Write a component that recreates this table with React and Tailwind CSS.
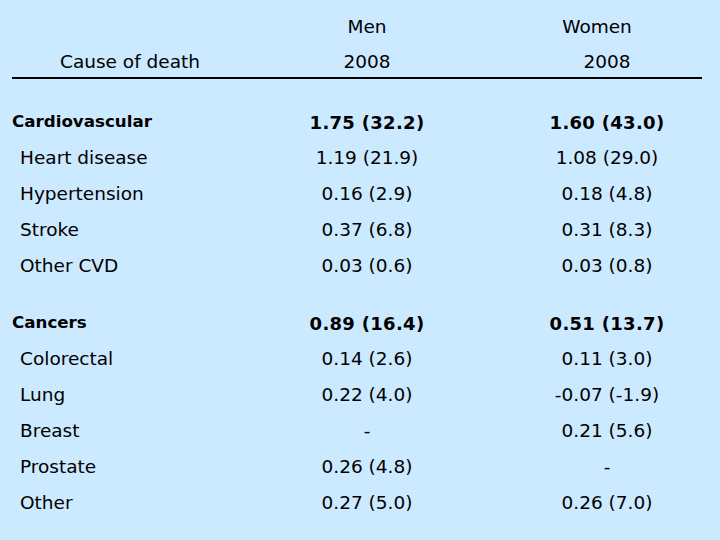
import React from 'react'

const groups = [
    {
        name: 'Cardiovascular',
        men: '1.75 (32.2)',
        women: '1.60 (43.0)',
        rows: [
            ['Heart disease', '1.19 (21.9)', '1.08 (29.0)'],
            ['Hypertension', '0.16 (2.9)', '0.18 (4.8)'],
            ['Stroke', '0.37 (6.8)', '0.31 (8.3)'],
            ['Other CVD', '0.03 (0.6)', '0.03 (0.8)'],
        ],
    },
    {
        name: 'Cancers',
        men: '0.89 (16.4)',
        women: '0.51 (13.7)',
        rows: [
            ['Colorectal', '0.14 (2.6)', '0.11 (3.0)'],
            ['Lung', '0.22 (4.0)', '-0.07 (-1.9)'],
            ['Breast', '-', '0.21 (5.6)'],
            ['Prostate', '0.26 (4.8)', '-'],
            ['Other', '0.27 (5.0)', '0.26 (7.0)'],
        ],
    },
]

const cols = "grid grid-cols-[228px_226px_226px] gap-x-[14px]"

const App = () => {
    return (
        <div className="w-[720px] h-[540px] overflow-hidden bg-[#cceaff] text-black pl-[12px] pt-[10px] font-['DejaVu_Sans',sans-serif] text-[18.5px]">
            <div className={`${cols} h-[34px] items-center`}>
                <div></div>
                <div className="text-center">Men</div>
                <div className="text-center pr-[20px]">Women</div>
            </div>
            <div className={`${cols} h-[33px] leading-[36px]`}>
                <div className="text-center pl-[8px]">Cause of death</div>
                <div className="text-center">2008</div>
                <div className="text-center">2008</div>
            </div>
            <div className="w-[690px] border-t-2 border-black"></div>

            {groups.map((g, i) => (
                <div key={g.name} className={i === 0 ? "mt-[25px]" : "mt-[21px]"}>
                    <div className={`${cols} h-[36px] items-center font-bold`}>
                        <div className="text-[16.7px]">{g.name}</div>
                        <div className="text-center text-[18px] tracking-[0.3px]">{g.men}</div>
                        <div className="text-center text-[18px] tracking-[0.3px]">{g.women}</div>
                    </div>
                    {g.rows.map(r => (
                        <div key={r[0]} className={`${cols} h-[36px] items-center`}>
                            <div className="pl-[8px]">{r[0]}</div>
                            <div className="text-center">{r[1]}</div>
                            <div className="text-center">{r[2]}</div>
                        </div>
                    ))}
                </div>
            ))}
        </div>
    )
}

export default App
